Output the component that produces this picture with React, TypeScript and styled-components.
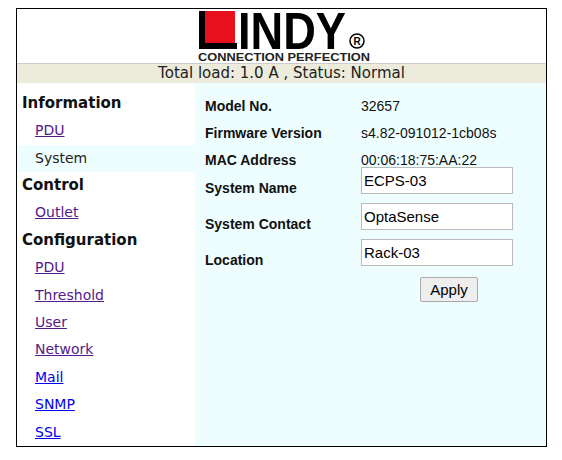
import React from "react";
import styled, { createGlobalStyle } from "styled-components";

const Global = createGlobalStyle`
  html, body { margin: 0; padding: 0; background: #fff; }
`;

const Frame = styled.div`
  position: relative;
  margin: 8px 0 0 16px;
  width: 531px;
  height: 439px;
  border: 1px solid #000;
  box-sizing: border-box;
  display: flex;
  flex-direction: column;
  overflow: hidden;
`;

const Header = styled.div`
  height: 56px;
  display: flex;
  align-items: center;
  justify-content: center;
  border-bottom: 1px solid #ccc;
  padding-left: 10px;
`;

const Status = styled.div`
  height: 26px;
  background: #ecebdc;
  font-family: "DejaVu Sans", Verdana, sans-serif;
  font-size: 15px;
  color: #222;
  display: flex;
  align-items: center;
  justify-content: center;
`;

const Main = styled.div`
  flex: 1;
  display: flex;
`;

const Side = styled.div`
  width: 178px;
  padding-top: 7px;
  font-family: "DejaVu Sans", Verdana, sans-serif;
`;

const Group = styled.div`
  height: 27.4px;
  line-height: 27.4px;
  padding-left: 5px;
  font-weight: bold;
  font-size: 15px;
  color: #111;
`;

const Item = styled.div<{ $active?: boolean }>`
  height: 27.4px;
  line-height: 27.4px;
  padding-left: 18px;
  font-size: 14px;
  background: ${(p) => (p.$active ? "#eefefe" : "transparent")};
  color: #222;
`;

const Link = styled.a<{ $visited?: boolean }>`
  color: ${(p) => (p.$visited ? "#551a8b" : "#0000ee")};
  text-decoration: underline;
`;

const Content = styled.div`
  flex: 1;
  background: #eefefe;
  padding: 12px 0 0 10px;
  font-family: "Liberation Sans", Arial, sans-serif;
  font-size: 14px;
  color: #111;
`;

const Row = styled.div<{ $h: number }>`
  display: flex;
  align-items: flex-start;
  height: ${(p) => p.$h}px;
  line-height: 22px;
`;

const Label = styled.div`
  width: 156px;
  font-weight: bold;
`;

const Input = styled.input`
  width: 152px;
  height: 27px;
  box-sizing: border-box;
  border: 1px solid #bbb;
  font: 15px "Liberation Sans", Arial, sans-serif;
  padding: 0 2px;
  margin-top: -10px;
`;

const Button = styled.button`
  margin: 0 0 0 215px;
  width: 58px;
  height: 25px;
  font: 15px "Liberation Sans", Arial, sans-serif;
  background: #eee;
  border: 1px solid #aaa;
  border-radius: 2px;
`;

const Logo = () => (
  <svg width="180" height="54" viewBox="0 0 180 54">
    <path d="M2 2 H8 V34 H40 V40 H2 Z" fill="#000" />
    <rect x="8" y="2" width="30" height="32" fill="#e8101c" />
    <text x="41" y="40" fontFamily="Liberation Sans, Arial, sans-serif" fontWeight="bold" fontSize="52" textLength="108" lengthAdjust="spacingAndGlyphs">INDY</text>
    <circle cx="160" cy="32" r="7" fill="none" stroke="#000" strokeWidth="1.5" />
    <text x="160" y="36" textAnchor="middle" fontFamily="Liberation Sans, Arial, sans-serif" fontWeight="bold" fontSize="10">R</text>
    <text x="1" y="52" fontFamily="Liberation Sans, Arial, sans-serif" fontWeight="bold" fontSize="11" textLength="172" lengthAdjust="spacingAndGlyphs" fill="#222">CONNECTION PERFECTION</text>
  </svg>
);

export default function App() {
  return (
    <>
      <Global />
      <Frame>
        <Header>
          <Logo />
        </Header>
        <Status>Total load: 1.0 A , Status: Normal</Status>
        <Main>
          <Side>
            <Group>Information</Group>
            <Item><Link $visited href="#">PDU</Link></Item>
            <Item $active>System</Item>
            <Group>Control</Group>
            <Item><Link $visited href="#">Outlet</Link></Item>
            <Group>Configuration</Group>
            <Item><Link $visited href="#">PDU</Link></Item>
            <Item><Link $visited href="#">Threshold</Link></Item>
            <Item><Link $visited href="#">User</Link></Item>
            <Item><Link $visited href="#">Network</Link></Item>
            <Item><Link href="#">Mail</Link></Item>
            <Item><Link href="#">SNMP</Link></Item>
            <Item><Link href="#">SSL</Link></Item>
          </Side>
          <Content>
            <Row $h={27}><Label>Model No.</Label>32657</Row>
            <Row $h={27}><Label>Firmware Version</Label>s4.82-091012-1cb08s</Row>
            <Row $h={28}><Label>MAC Address</Label>00:06:18:75:AA:22</Row>
            <Row $h={36}><Label>System Name</Label><Input defaultValue="ECPS-03" /></Row>
            <Row $h={36}><Label>System Contact</Label><Input defaultValue="OptaSense" /></Row>
            <Row $h={28}><Label>Location</Label><Input defaultValue="Rack-03" /></Row>
            <Button>Apply</Button>
          </Content>
        </Main>
      </Frame>
    </>
  );
}
